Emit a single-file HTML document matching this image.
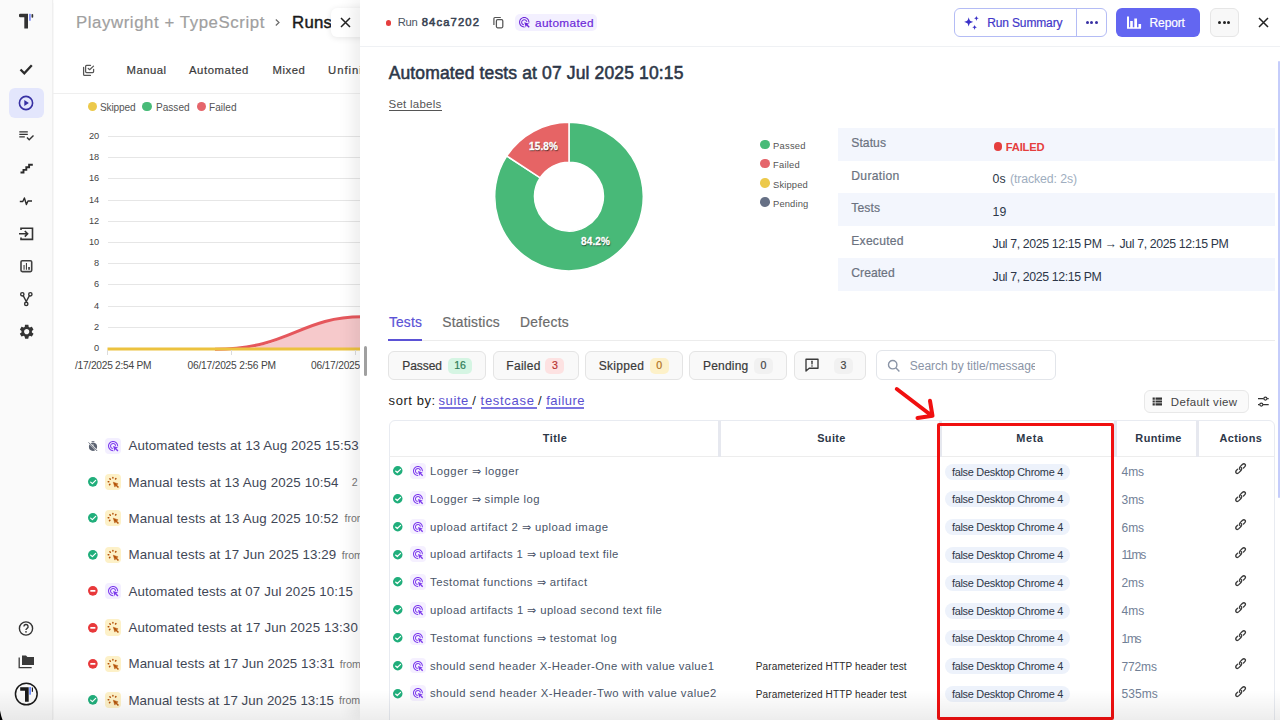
<!DOCTYPE html>
<html><head><meta charset="utf-8">
<style>
*{box-sizing:border-box;margin:0;padding:0}
html,body{width:1280px;height:720px;overflow:hidden;background:#fff;font-family:"Liberation Sans",sans-serif;color:#1f2937}
.t{position:absolute;white-space:nowrap}
svg{overflow:visible}
</style></head><body>

<div style="position:absolute;left:0;top:0;width:53px;height:720px;background:#fafafa;border-right:1px solid #efefef;box-shadow:0.5px 0 1px rgba(0,0,0,0.03)"></div>
<div style="position:absolute;left:8.5px;top:88px;width:35px;height:29.5px;background:#e3e6fc;border-radius:6px"></div>
<svg style="position:absolute;left:0;top:0" width="52" height="40"><path d="M19 15q0-1.2 1.2-1.2H28v14.4q0 .3-.3.3h-3.1q-.3 0-.3-.3V17.3h-4.1q-1.2 0-1.2-1.2z" fill="#333"/><rect x="29" y="13.8" width="1.8" height="7" rx="0.5" fill="#8090f8"/><rect x="31.5" y="14" width="1.7" height="3.8" rx="0.8" fill="#333"/></svg>
<svg style="position:absolute;left:19px;top:63px;" width="14" height="12" viewBox="0 0 14 12"><path d="M1.5 6.5l3.8 3.8L12.8 2.2" stroke="#2b2b2b" stroke-width="2.3" fill="none"/></svg>
<svg style="position:absolute;left:18px;top:95px;" width="16" height="16" viewBox="0 0 16 16"><circle cx="8" cy="8" r="6.6" stroke="#3730a3" stroke-width="1.6" fill="none"/><path d="M6.3 4.9v6.2l4.6-3.1z" fill="#3730a3"/></svg>
<svg style="position:absolute;left:18px;top:130px;" width="17" height="12" viewBox="0 0 17 12"><path d="M1.3 1.8h8.5M1.3 4.3h8.5M1.3 6.9h5.5" stroke="#333" stroke-width="1.3"/><path d="M9 7.5l2.2 2.3 4.3-4.3" stroke="#333" stroke-width="1.4" fill="none"/></svg>
<svg style="position:absolute;left:19px;top:162px;" width="15" height="12" viewBox="0 0 15 12"><path d="M1.5 10.5h3v-2.6h2.8v-2.6h2.8V2.7h3.7" stroke="#2b2b2b" stroke-width="1.9" fill="none"/></svg>
<svg style="position:absolute;left:19px;top:195px;" width="14" height="12" viewBox="0 0 14 12"><path d="M0.8 6.5h3l1.6-3.5 2 6.5 1.6-3.5h4" stroke="#2b2b2b" stroke-width="1.4" fill="none" stroke-linejoin="round"/></svg>
<svg style="position:absolute;left:18px;top:226px;" width="16" height="15" viewBox="0 0 16 15"><path d="M3 4V2.2h11.5v11.2H3v-2" stroke="#333" stroke-width="1.6" fill="none"/><path d="M1 7.8h8.5M6.8 5l2.8 2.8-2.8 2.8" stroke="#333" stroke-width="1.6" fill="none"/></svg>
<svg style="position:absolute;left:0;top:0" width="52" height="720"><rect x="21" y="260.8" width="10.7" height="10.8" rx="1.3" stroke="#404040" stroke-width="1.6" fill="none"/><path d="M23.5 264.9h1.1v4.9h-1.1z M25.9 263h1.1v6.8h-1.1z M28.2 267.1h1.7v2.7h-1.7z" fill="#404040"/></svg>
<svg style="position:absolute;left:0;top:0" width="52" height="720"><g stroke="#333" stroke-width="1.4" fill="none"><circle cx="22.3" cy="294.3" r="1.65"/><circle cx="30.35" cy="294.3" r="1.65"/><circle cx="26.25" cy="303.9" r="1.65"/><path d="M23.2 295.6L26.25 301.5 29.4 295.6"/></g></svg>
<svg style="position:absolute;left:17.55px;top:323.3px;" width="17.4" height="17.4" viewBox="0 0 24 24"><path d="M19.14 12.94c.04-.3.06-.61.06-.94 0-.32-.02-.64-.07-.94l2.03-1.58c.18-.14.23-.41.12-.61l-1.920-3.32c-.12-.22-.37-.29-.59-.22l-2.39.96c-.5-.38-1.03-.7-1.62-.94l-.36-2.54c-.04-.24-.24-.41-.48-.41h-3.84c-.24 0-.43.17-.47.41l-.36 2.54c-.59.24-1.13.57-1.62.94l-2.39-.96c-.22-.08-.47 0-.59.22L2.74 8.87c-.12.21-.08.47.12.61l2.03 1.58c-.05.3-.09.63-.09.94s.02.64.07.94l-2.03 1.58c-.18.14-.23.41-.12.61l1.92 3.32c.12.22.37.29.59.22l2.39-.96c.5.38 1.03.7 1.62.94l.36 2.54c.05.24.24.41.48.41h3.84c.24 0 .44-.17.47-.41l.36-2.54c.59-.24 1.13-.56 1.62-.94l2.39.96c.22.08.47 0 .59-.22l1.92-3.32c.12-.22.07-.47-.12-.61l-2.01-1.58zM12 15.6c-1.98 0-3.6-1.62-3.6-3.6s1.62-3.6 3.6-3.6 3.6 1.62 3.6 3.6-1.62 3.6-3.6 3.6z" fill="#333"/></svg>
<svg style="position:absolute;left:18px;top:620px;" width="16" height="16" viewBox="0 0 16 16"><circle cx="8" cy="8.5" r="6.6" stroke="#333" stroke-width="1.4" fill="none"/><path d="M5.9 6.6a2.1 2.1 0 1 1 3 1.9c-0.7 0.4-0.9 0.8-0.9 1.6" stroke="#333" stroke-width="1.4" fill="none"/><circle cx="8" cy="11.8" r="0.85" fill="#333"/></svg>
<svg style="position:absolute;left:18px;top:654px;" width="17" height="15" viewBox="0 0 17 15"><path d="M4 1.5h4l1.4 1.4h6.6v8.2H4z" fill="#3a3a3a"/><path d="M1.2 3.5v10.2h12.5" stroke="#3a3a3a" stroke-width="1.3" fill="none"/></svg>
<svg style="position:absolute;left:0;top:660px" width="52" height="60"><circle cx="26.3" cy="34" r="10.85" stroke="#1a1a1a" stroke-width="1.5" fill="none"/><path d="M20.2 27.3h8.5v14.4h-3.7V30.8h-4.8z" fill="#1a1a1a"/><rect x="29.2" y="27" width="1.8" height="7.7" fill="#6f8dff"/><rect x="31.8" y="27.5" width="1.2" height="4.3" fill="#1a1a1a"/></svg>
<div class="t" id="t0" style="left:76.00px;top:13.10px;font-size:16.80px;line-height:19px;color:#a0a0a0;-webkit-text-stroke:0.2px #a0a0a0;letter-spacing:0.584px;">Playwright + TypeScript</div>
<svg style="position:absolute;left:274px;top:18px;" width="7" height="9" viewBox="0 0 7 9"><path d="M1.8 1.5l3.2 3-3.2 3" stroke="#6b6b6b" stroke-width="1.2" fill="none"/></svg>
<div class="t" id="t1" style="left:292.10px;top:13.20px;font-size:16.80px;line-height:19px;color:#1a1a1a;-webkit-text-stroke:0.2px #1a1a1a;letter-spacing:0.172px;-webkit-text-stroke:0.45px #1a1a1a;">Runs</div>
<svg style="position:absolute;left:0;top:0" width="360" height="100"><g stroke="#555" stroke-width="1.25" fill="none" stroke-linecap="round" stroke-linejoin="round"><path d="M90.5 65.4H86.6q-1 0-1 1v5.1q0 1 1 1h6q1 0 1-1v-2.2"/><path d="M83.6 67.3v7.1q0 1 1 1h5.8"/><path d="M88.2 68.4l1.4 1.3 3.9-3.6"/></g></svg>
<div class="t" id="t2" style="left:126.50px;top:64.40px;font-size:11.30px;line-height:12px;color:#3a3a3a;-webkit-text-stroke:0.2px #3a3a3a;letter-spacing:0.492px;">Manual</div>
<div class="t" id="t3" style="left:189.00px;top:64.40px;font-size:11.30px;line-height:12px;color:#3a3a3a;-webkit-text-stroke:0.2px #3a3a3a;letter-spacing:0.581px;">Automated</div>
<div class="t" id="t4" style="left:272.50px;top:64.40px;font-size:11.30px;line-height:12px;color:#3a3a3a;-webkit-text-stroke:0.2px #3a3a3a;letter-spacing:0.537px;">Mixed</div>
<div class="t" id="t5" style="left:328.00px;top:64.40px;font-size:11.30px;line-height:12px;color:#3a3a3a;-webkit-text-stroke:0.2px #3a3a3a;letter-spacing:0.989px;">Unfinished</div>
<div style="position:absolute;left:52px;top:92.5px;width:308px;height:1px;background:#efefef"></div>
<div style="position:absolute;left:87.7px;top:101.5px;width:9.6px;height:9.6px;border-radius:50%;background:#ecc94b"></div>
<div class="t" id="t6" style="left:100.00px;top:102.00px;font-size:10.10px;line-height:11px;color:#555;letter-spacing:-0.144px;">Skipped</div>
<div style="position:absolute;left:142.2px;top:101.5px;width:9.6px;height:9.6px;border-radius:50%;background:#48bb78"></div>
<div class="t" id="t7" style="left:156.00px;top:102.00px;font-size:10.10px;line-height:11px;color:#555;letter-spacing:-0.011px;">Passed</div>
<div style="position:absolute;left:196.7px;top:101.5px;width:9.6px;height:9.6px;border-radius:50%;background:#e5656b"></div>
<div class="t" id="t8" style="left:209.00px;top:102.00px;font-size:10.10px;line-height:11px;color:#555;letter-spacing:0.024px;">Failed</div>
<div style="position:absolute;left:107.5px;top:135.9px;width:253px;height:1px;background:#e6e6e6"></div>
<div class="t" id="t9" style="left:99.20px;top:131.00px;font-size:9.20px;line-height:10px;color:#444;transform:translateX(-100%);">20</div>
<div style="position:absolute;left:107.5px;top:157.1px;width:253px;height:1px;background:#e6e6e6"></div>
<div class="t" id="t10" style="left:99.20px;top:152.20px;font-size:9.20px;line-height:10px;color:#444;transform:translateX(-100%);">18</div>
<div style="position:absolute;left:107.5px;top:178.3px;width:253px;height:1px;background:#e6e6e6"></div>
<div class="t" id="t11" style="left:99.20px;top:173.40px;font-size:9.20px;line-height:10px;color:#444;transform:translateX(-100%);">16</div>
<div style="position:absolute;left:107.5px;top:199.5px;width:253px;height:1px;background:#e6e6e6"></div>
<div class="t" id="t12" style="left:99.20px;top:194.60px;font-size:9.20px;line-height:10px;color:#444;transform:translateX(-100%);">14</div>
<div style="position:absolute;left:107.5px;top:220.7px;width:253px;height:1px;background:#e6e6e6"></div>
<div class="t" id="t13" style="left:99.20px;top:215.80px;font-size:9.20px;line-height:10px;color:#444;transform:translateX(-100%);">12</div>
<div style="position:absolute;left:107.5px;top:241.9px;width:253px;height:1px;background:#e6e6e6"></div>
<div class="t" id="t14" style="left:99.20px;top:237.00px;font-size:9.20px;line-height:10px;color:#444;transform:translateX(-100%);">10</div>
<div style="position:absolute;left:107.5px;top:263.1px;width:253px;height:1px;background:#e6e6e6"></div>
<div class="t" id="t15" style="left:99.20px;top:258.20px;font-size:9.20px;line-height:10px;color:#444;transform:translateX(-100%);">8</div>
<div style="position:absolute;left:107.5px;top:284.3px;width:253px;height:1px;background:#e6e6e6"></div>
<div class="t" id="t16" style="left:99.20px;top:279.40px;font-size:9.20px;line-height:10px;color:#444;transform:translateX(-100%);">6</div>
<div style="position:absolute;left:107.5px;top:305.5px;width:253px;height:1px;background:#e6e6e6"></div>
<div class="t" id="t17" style="left:99.20px;top:300.60px;font-size:9.20px;line-height:10px;color:#444;transform:translateX(-100%);">4</div>
<div style="position:absolute;left:107.5px;top:326.7px;width:253px;height:1px;background:#e6e6e6"></div>
<div class="t" id="t18" style="left:99.20px;top:321.80px;font-size:9.20px;line-height:10px;color:#444;transform:translateX(-100%);">2</div>
<div class="t" id="t19" style="left:99.20px;top:343.00px;font-size:9.20px;line-height:10px;color:#444;transform:translateX(-100%);">0</div>
<svg style="position:absolute;left:52px;top:0" width="308" height="400" viewBox="52 0 308 400"><path d="M232 349 C 290 349, 300 316.8, 360 316.8 L360 349 Z" fill="#f6c9cb"/><path d="M215 349.2 C 290 349.2, 300 316.8, 362 316.8" stroke="#e5575c" stroke-width="3" fill="none"/><path d="M107.5 349 H360" stroke="#ecc23f" stroke-width="3"/><path d="M107.5 350 v5 M231.5 350 v5 M355.5 350 v5" stroke="#dcdcdc" stroke-width="1"/></svg>
<div class="t" id="t20" style="left:75.00px;top:360.00px;font-size:10.20px;line-height:11px;color:#444;letter-spacing:-0.263px;">/17/2025 2:54 PM</div>
<div class="t" id="t21" style="left:187.50px;top:360.00px;font-size:10.20px;line-height:11px;color:#444;letter-spacing:-0.192px;">06/17/2025 2:56 PM</div>
<div class="t" id="t22" style="left:311.00px;top:360.00px;font-size:10.20px;line-height:11px;color:#444;letter-spacing:-0.192px;">06/17/2025 2:58 PM</div>
<svg style="position:absolute;left:87px;top:439.6px;" width="12" height="12" viewBox="0 0 12 12"><circle cx="6" cy="6.8" r="4.1" fill="#5b6271"/><rect x="4.6" y="1.2" width="2.8" height="1.1" fill="#5b6271"/><path d="M1.4 2.2l9 9" stroke="#fff" stroke-width="1.7"/><path d="M1.6 2.4l8.6 8.6" stroke="#5b6271" stroke-width="0.9"/><path d="M6 4.2v1.8" stroke="#fff" stroke-width="0.7"/></svg>
<div style="position:absolute;left:105.2px;top:437.5px;width:16.1px;height:16.2px;border-radius:4px;background:#f3efff"></div>
<svg style="position:absolute;left:107.2px;top:439.5px;" width="12.2" height="12.2" viewBox="0 0 24 24"><path d="M11.71 17.99C8.53 17.84 6 15.22 6 12c0-3.31 2.69-6 6-6 3.22 0 5.84 2.53 5.99 5.71l-2.1-.63C15.48 9.31 13.89 8 12 8c-2.21 0-4 1.79-4 4 0 1.89 1.31 3.47 3.08 3.89l.63 2.1zM22 12c0 .3-.01.6-.04.9l-1.97-.59c.01-.1.01-.21.01-.31 0-4.42-3.58-8-8-8s-8 3.58-8 8 3.58 8 8 8c.1 0 .21 0 .31-.01l.59 1.97c-.3.03-.6.04-.9.04-5.52 0-10-4.48-10-10S6.48 2 12 2s10 4.48 10 10zm-3.77 4.26L22 15l-10-3 3 10 1.26-3.77 4.27 4.27 1.98-1.98-4.28-4.26z" fill="#7c3aed"/></svg>
<div class="t" id="t23" style="left:128.50px;top:438.20px;font-size:13.30px;line-height:15px;color:#3f4756;letter-spacing:0.113px;">Automated tests at 13 Aug 2025 15:53</div>
<svg style="position:absolute;left:88.15px;top:477.12px;" width="9.7" height="9.7" viewBox="0 0 10 10"><circle cx="5" cy="5" r="5" fill="#20ae7b"/><path d="M2.75 5.3l1.75 1.55 3.4-3.3" stroke="#fff" stroke-width="1.25" fill="none" stroke-linecap="round" stroke-linejoin="round"/></svg>
<div style="position:absolute;left:105.2px;top:473.87px;width:16.1px;height:16.2px;border-radius:4px;background:#fdf1c8"></div>
<svg style="position:absolute;left:105.2px;top:473.87px;" width="16" height="16" viewBox="0 0 16 16"><g stroke="#b45309" stroke-width="1.5" stroke-linecap="round"><path d="M4.9 4.8l0.4 0.4M7.9 3.4v0.6M10.9 4.6l-0.4 0.4M3.2 7.8h0.6M4.5 10.6l0.4-0.4"/></g><path d="M8.3 8.2L13.1 9.9 11.4 10.7 13.7 13 13 13.7 10.7 11.4 9.9 13.1Z" fill="#b45309" stroke="#b45309" stroke-width="0.5" stroke-linejoin="round"/></svg>
<div class="t" id="t24" style="left:128.50px;top:474.57px;font-size:13.30px;line-height:15px;color:#3f4756;letter-spacing:0.139px;">Manual tests at 13 Aug 2025 10:54</div>
<div class="t" id="t25" style="left:351.80px;top:475.97px;font-size:10.60px;line-height:12px;color:#777;">2</div>
<svg style="position:absolute;left:88.15px;top:513.49px;" width="9.7" height="9.7" viewBox="0 0 10 10"><circle cx="5" cy="5" r="5" fill="#20ae7b"/><path d="M2.75 5.3l1.75 1.55 3.4-3.3" stroke="#fff" stroke-width="1.25" fill="none" stroke-linecap="round" stroke-linejoin="round"/></svg>
<div style="position:absolute;left:105.2px;top:510.24px;width:16.1px;height:16.2px;border-radius:4px;background:#fdf1c8"></div>
<svg style="position:absolute;left:105.2px;top:510.24px;" width="16" height="16" viewBox="0 0 16 16"><g stroke="#b45309" stroke-width="1.5" stroke-linecap="round"><path d="M4.9 4.8l0.4 0.4M7.9 3.4v0.6M10.9 4.6l-0.4 0.4M3.2 7.8h0.6M4.5 10.6l0.4-0.4"/></g><path d="M8.3 8.2L13.1 9.9 11.4 10.7 13.7 13 13 13.7 10.7 11.4 9.9 13.1Z" fill="#b45309" stroke="#b45309" stroke-width="0.5" stroke-linejoin="round"/></svg>
<div class="t" id="t26" style="left:128.50px;top:510.94px;font-size:13.30px;line-height:15px;color:#3f4756;letter-spacing:0.139px;">Manual tests at 13 Aug 2025 10:52</div>
<div class="t" id="t27" style="left:344.50px;top:512.34px;font-size:10.60px;line-height:12px;color:#777;">from</div>
<svg style="position:absolute;left:88.15px;top:549.86px;" width="9.7" height="9.7" viewBox="0 0 10 10"><circle cx="5" cy="5" r="5" fill="#20ae7b"/><path d="M2.75 5.3l1.75 1.55 3.4-3.3" stroke="#fff" stroke-width="1.25" fill="none" stroke-linecap="round" stroke-linejoin="round"/></svg>
<div style="position:absolute;left:105.2px;top:546.61px;width:16.1px;height:16.2px;border-radius:4px;background:#fdf1c8"></div>
<svg style="position:absolute;left:105.2px;top:546.61px;" width="16" height="16" viewBox="0 0 16 16"><g stroke="#b45309" stroke-width="1.5" stroke-linecap="round"><path d="M4.9 4.8l0.4 0.4M7.9 3.4v0.6M10.9 4.6l-0.4 0.4M3.2 7.8h0.6M4.5 10.6l0.4-0.4"/></g><path d="M8.3 8.2L13.1 9.9 11.4 10.7 13.7 13 13 13.7 10.7 11.4 9.9 13.1Z" fill="#b45309" stroke="#b45309" stroke-width="0.5" stroke-linejoin="round"/></svg>
<div class="t" id="t28" style="left:128.50px;top:547.31px;font-size:13.30px;line-height:15px;color:#3f4756;letter-spacing:0.115px;">Manual tests at 17 Jun 2025 13:29</div>
<div class="t" id="t29" style="left:341.70px;top:548.71px;font-size:10.60px;line-height:12px;color:#777;">from</div>
<svg style="position:absolute;left:88.15px;top:586.23px;" width="9.7" height="9.7" viewBox="0 0 10 10"><circle cx="5" cy="5" r="5" fill="#e8383a"/><rect x="2.4" y="4.1" width="5.2" height="1.8" fill="#fff"/></svg>
<div style="position:absolute;left:105.2px;top:582.98px;width:16.1px;height:16.2px;border-radius:4px;background:#f3efff"></div>
<svg style="position:absolute;left:107.2px;top:584.98px;" width="12.2" height="12.2" viewBox="0 0 24 24"><path d="M11.71 17.99C8.53 17.84 6 15.22 6 12c0-3.31 2.69-6 6-6 3.22 0 5.84 2.53 5.99 5.71l-2.1-.63C15.48 9.31 13.89 8 12 8c-2.21 0-4 1.79-4 4 0 1.89 1.31 3.47 3.08 3.89l.63 2.1zM22 12c0 .3-.01.6-.04.9l-1.97-.59c.01-.1.01-.21.01-.31 0-4.42-3.58-8-8-8s-8 3.58-8 8 3.58 8 8 8c.1 0 .21 0 .31-.01l.59 1.97c-.3.03-.6.04-.9.04-5.52 0-10-4.48-10-10S6.48 2 12 2s10 4.48 10 10zm-3.77 4.26L22 15l-10-3 3 10 1.26-3.77 4.27 4.27 1.98-1.98-4.28-4.26z" fill="#7c3aed"/></svg>
<div class="t" id="t30" style="left:128.50px;top:583.68px;font-size:13.30px;line-height:15px;color:#3f4756;letter-spacing:0.120px;">Automated tests at 07 Jul 2025 10:15</div>
<svg style="position:absolute;left:88.15px;top:622.6px;" width="9.7" height="9.7" viewBox="0 0 10 10"><circle cx="5" cy="5" r="5" fill="#e8383a"/><rect x="2.4" y="4.1" width="5.2" height="1.8" fill="#fff"/></svg>
<div style="position:absolute;left:105.2px;top:619.35px;width:16.1px;height:16.2px;border-radius:4px;background:#fdf1c8"></div>
<svg style="position:absolute;left:105.2px;top:619.35px;" width="16" height="16" viewBox="0 0 16 16"><g stroke="#b45309" stroke-width="1.5" stroke-linecap="round"><path d="M4.9 4.8l0.4 0.4M7.9 3.4v0.6M10.9 4.6l-0.4 0.4M3.2 7.8h0.6M4.5 10.6l0.4-0.4"/></g><path d="M8.3 8.2L13.1 9.9 11.4 10.7 13.7 13 13 13.7 10.7 11.4 9.9 13.1Z" fill="#b45309" stroke="#b45309" stroke-width="0.5" stroke-linejoin="round"/></svg>
<div class="t" id="t31" style="left:128.50px;top:620.05px;font-size:13.30px;line-height:15px;color:#3f4756;letter-spacing:0.130px;">Automated tests at 17 Jun 2025 13:30</div>
<svg style="position:absolute;left:88.15px;top:658.97px;" width="9.7" height="9.7" viewBox="0 0 10 10"><circle cx="5" cy="5" r="5" fill="#e8383a"/><rect x="2.4" y="4.1" width="5.2" height="1.8" fill="#fff"/></svg>
<div style="position:absolute;left:105.2px;top:655.72px;width:16.1px;height:16.2px;border-radius:4px;background:#fdf1c8"></div>
<svg style="position:absolute;left:105.2px;top:655.72px;" width="16" height="16" viewBox="0 0 16 16"><g stroke="#b45309" stroke-width="1.5" stroke-linecap="round"><path d="M4.9 4.8l0.4 0.4M7.9 3.4v0.6M10.9 4.6l-0.4 0.4M3.2 7.8h0.6M4.5 10.6l0.4-0.4"/></g><path d="M8.3 8.2L13.1 9.9 11.4 10.7 13.7 13 13 13.7 10.7 11.4 9.9 13.1Z" fill="#b45309" stroke="#b45309" stroke-width="0.5" stroke-linejoin="round"/></svg>
<div class="t" id="t32" style="left:128.50px;top:656.42px;font-size:13.30px;line-height:15px;color:#3f4756;letter-spacing:0.065px;">Manual tests at 17 Jun 2025 13:31</div>
<div class="t" id="t33" style="left:339.70px;top:657.82px;font-size:10.60px;line-height:12px;color:#777;">from</div>
<svg style="position:absolute;left:88.15px;top:695.34px;" width="9.7" height="9.7" viewBox="0 0 10 10"><circle cx="5" cy="5" r="5" fill="#20ae7b"/><path d="M2.75 5.3l1.75 1.55 3.4-3.3" stroke="#fff" stroke-width="1.25" fill="none" stroke-linecap="round" stroke-linejoin="round"/></svg>
<div style="position:absolute;left:105.2px;top:692.09px;width:16.1px;height:16.2px;border-radius:4px;background:#fdf1c8"></div>
<svg style="position:absolute;left:105.2px;top:692.09px;" width="16" height="16" viewBox="0 0 16 16"><g stroke="#b45309" stroke-width="1.5" stroke-linecap="round"><path d="M4.9 4.8l0.4 0.4M7.9 3.4v0.6M10.9 4.6l-0.4 0.4M3.2 7.8h0.6M4.5 10.6l0.4-0.4"/></g><path d="M8.3 8.2L13.1 9.9 11.4 10.7 13.7 13 13 13.7 10.7 11.4 9.9 13.1Z" fill="#b45309" stroke="#b45309" stroke-width="0.5" stroke-linejoin="round"/></svg>
<div class="t" id="t34" style="left:128.50px;top:692.79px;font-size:13.30px;line-height:15px;color:#3f4756;letter-spacing:0.040px;">Manual tests at 17 Jun 2025 13:15</div>
<div class="t" id="t35" style="left:339.00px;top:694.19px;font-size:10.60px;line-height:12px;color:#777;">from</div>
<div style="position:absolute;left:363.5px;top:346px;width:3.2px;height:29.5px;border-radius:2px;background:#a0a0a0;z-index:5"></div>
<div style="position:absolute;left:331px;top:8px;width:40px;height:29px;border-radius:6px;background:#fff;box-shadow:0 1px 6px rgba(0,0,0,0.10)"></div>
<svg style="position:absolute;left:340px;top:17px;" width="11" height="11" viewBox="0 0 11 11"><path d="M1 1l9 9M10 1l-9 9" stroke="#222" stroke-width="1.5"/></svg>
<div style="position:absolute;left:360px;top:0;width:920px;height:720px;background:#fff;box-shadow:-8px 0 14px rgba(0,0,0,0.07)"></div>
<div style="position:absolute;left:360px;top:46.3px;width:920px;height:1.2px;background:#eff1f4"></div>
<div style="position:absolute;left:385.5px;top:20.3px;width:5.6px;height:5.6px;border-radius:50%;background:#e53e3e"></div>
<div class="t" id="t36" style="left:397.80px;top:16.10px;font-size:11.25px;line-height:12px;color:#4b5563;letter-spacing:-0.391px;">Run</div>
<div class="t" id="t37" style="left:421.70px;top:16.10px;font-size:11.25px;line-height:12px;color:#374151;-webkit-text-stroke:0.55px #374151;letter-spacing:1.119px;">84ca7202</div>
<svg style="position:absolute;left:490px;top:14px;" width="16" height="16" viewBox="0 0 16 16"><path d="M3.9 11V4.5q0-1 1-1H10.8" stroke="#555" stroke-width="1.2" fill="none"/><rect x="6.4" y="5.7" width="6.4" height="8.1" rx="1.2" stroke="#555" stroke-width="1.25" fill="none"/></svg>
<div style="position:absolute;left:515px;top:14.4px;width:82px;height:16.4px;border-radius:5px;background:#f3f0ff"></div>
<svg style="position:absolute;left:518.25px;top:16.15px;" width="12.5" height="12.5" viewBox="0 0 24 24"><path d="M11.71 17.99C8.53 17.84 6 15.22 6 12c0-3.31 2.69-6 6-6 3.22 0 5.84 2.53 5.99 5.71l-2.1-.63C15.48 9.31 13.89 8 12 8c-2.21 0-4 1.79-4 4 0 1.89 1.31 3.47 3.08 3.89l.63 2.1zM22 12c0 .3-.01.6-.04.9l-1.97-.59c.01-.1.01-.21.01-.31 0-4.42-3.58-8-8-8s-8 3.58-8 8 3.58 8 8 8c.1 0 .21 0 .31-.01l.59 1.97c-.3.03-.6.04-.9.04-5.52 0-10-4.48-10-10S6.48 2 12 2s10 4.48 10 10zm-3.77 4.26L22 15l-10-3 3 10 1.26-3.77 4.27 4.27 1.98-1.98-4.28-4.26z" fill="#6d28d9"/></svg>
<div class="t" id="t38" style="left:535.00px;top:15.70px;font-size:11.80px;line-height:14px;color:#6d28d9;-webkit-text-stroke:0.2px #6d28d9;letter-spacing:0.352px;">automated</div>
<div style="position:absolute;left:953.5px;top:8px;width:153px;height:28.5px;border-radius:6px;border:1px solid #b4bcf5;background:#fff"></div>
<div style="position:absolute;left:1076px;top:8px;width:1px;height:28.5px;background:#b4bcf5"></div>
<svg style="position:absolute;left:0;top:0" width="1280" height="40"><path d="M968.70 17.30 C969.71 20.89 969.71 20.89 973.30 21.90 C969.71 22.91 969.71 22.91 968.70 26.50 C967.69 22.91 967.69 22.91 964.10 21.90 C967.69 20.89 967.69 20.89 968.70 17.30 Z M976.40 15.70 C976.97 17.73 976.97 17.73 979.00 18.30 C976.97 18.87 976.97 18.87 976.40 20.90 C975.83 18.87 975.83 18.87 973.80 18.30 C975.83 17.73 975.83 17.73 976.40 15.70 Z M974.60 24.70 C975.17 26.73 975.17 26.73 977.20 27.30 C975.17 27.87 975.17 27.87 974.60 29.90 C974.03 27.87 974.03 27.87 972.00 27.30 C974.03 26.73 974.03 26.73 974.60 24.70 Z" fill="#3b32c8"/></svg>
<div class="t" id="t39" style="left:987.20px;top:16.20px;font-size:12.00px;line-height:14px;color:#4338ca;-webkit-text-stroke:0.2px #4338ca;letter-spacing:-0.139px;">Run Summary</div>
<div style="position:absolute;left:1085.5px;top:21.3px;width:3px;height:3px;border-radius:50%;background:#3730a3"></div>
<div style="position:absolute;left:1090px;top:21.3px;width:3px;height:3px;border-radius:50%;background:#3730a3"></div>
<div style="position:absolute;left:1094.5px;top:21.3px;width:3px;height:3px;border-radius:50%;background:#3730a3"></div>
<div style="position:absolute;left:1116px;top:8px;width:84px;height:29px;border-radius:6px;background:#6366f1"></div>
<svg style="position:absolute;left:0;top:0" width="1280" height="40"><path d="M1127 16.6h2v10.6h12v1.6h-14z M1130.2 21h2.6v7h-2.6z M1134.3 18.5h2.7v9.5h-2.7z M1138.5 24h2.6v4h-2.6z" fill="#fff"/></svg>
<div class="t" id="t40" style="left:1149.60px;top:16.20px;font-size:12.00px;line-height:14px;color:#ffffff;-webkit-text-stroke:0.2px #ffffff;letter-spacing:-0.137px;">Report</div>
<div style="position:absolute;left:1209.6px;top:8px;width:29px;height:29px;border-radius:6px;background:#f8f8f8;border:1px solid #e6e6e6"></div>
<div style="position:absolute;left:1218px;top:21.3px;width:3px;height:3px;border-radius:50%;background:#222"></div>
<div style="position:absolute;left:1222.5px;top:21.3px;width:3px;height:3px;border-radius:50%;background:#222"></div>
<div style="position:absolute;left:1227px;top:21.3px;width:3px;height:3px;border-radius:50%;background:#222"></div>
<svg style="position:absolute;left:1258px;top:17px;" width="11" height="11" viewBox="0 0 11 11"><path d="M1 1l9 9M10 1l-9 9" stroke="#222" stroke-width="1.5"/></svg>
<div class="t" id="t41" style="left:388.70px;top:62.80px;font-size:17.50px;line-height:20px;color:#2d3748;-webkit-text-stroke:0.55px #2d3748;letter-spacing:0.137px;">Automated tests at 07 Jul 2025 10:15</div>
<div class="t" id="t42" style="left:388.50px;top:97.50px;font-size:11.50px;line-height:12px;color:#555;letter-spacing:0.250px;">Set labels</div>
<div style="position:absolute;left:388.5px;top:110px;width:53px;height:1.2px;background:#555"></div>
<svg style="position:absolute;left:0;top:0" width="1280" height="300"><path d="M569.00 122.30 A74.30 74.30 0 1 1 506.80 155.96 L540.20 177.78 A34.40 34.40 0 1 0 569.00 162.20 Z" fill="#48b978" stroke="#fff" stroke-width="1.5"/><path d="M506.80 155.96 A74.30 74.30 0 0 1 569.00 122.30 L569.00 162.20 A34.40 34.40 0 0 0 540.20 177.78 Z" fill="#e66465" stroke="#fff" stroke-width="1.5"/></svg>
<div class="t" id="t43" style="left:529.00px;top:141.00px;font-size:10.00px;line-height:11px;color:#fff;font-weight:700;letter-spacing:0.134px;text-shadow:0.6px 0.8px 1.2px rgba(0,0,0,0.7);-webkit-text-stroke:0.3px #fff;">15.8%</div>
<div class="t" id="t44" style="left:581.00px;top:236.00px;font-size:10.00px;line-height:11px;color:#fff;font-weight:700;letter-spacing:0.134px;text-shadow:0.6px 0.8px 1.2px rgba(0,0,0,0.7);-webkit-text-stroke:0.3px #fff;">84.2%</div>
<div style="position:absolute;left:760.4px;top:139.6px;width:9.6px;height:9.6px;border-radius:50%;background:#48bb78"></div>
<div class="t" id="t45" style="left:773.00px;top:140.10px;font-size:9.40px;line-height:11px;color:#555;letter-spacing:0.249px;">Passed</div>
<div style="position:absolute;left:760.4px;top:158.8px;width:9.6px;height:9.6px;border-radius:50%;background:#e5656b"></div>
<div class="t" id="t46" style="left:773.00px;top:159.30px;font-size:9.40px;line-height:11px;color:#555;letter-spacing:0.236px;">Failed</div>
<div style="position:absolute;left:760.4px;top:178px;width:9.6px;height:9.6px;border-radius:50%;background:#ecc94b"></div>
<div class="t" id="t47" style="left:773.00px;top:178.50px;font-size:9.40px;line-height:11px;color:#555;letter-spacing:0.139px;">Skipped</div>
<div style="position:absolute;left:760.4px;top:197.2px;width:9.6px;height:9.6px;border-radius:50%;background:#667085"></div>
<div class="t" id="t48" style="left:773.00px;top:197.70px;font-size:9.40px;line-height:11px;color:#555;letter-spacing:0.135px;">Pending</div>
<div style="position:absolute;left:838px;top:128.2px;width:437px;height:32.5px;background:#f3f6fd"></div>
<div class="t" id="t49" style="left:851.30px;top:136.20px;font-size:12.15px;line-height:14px;color:#6b7280;-webkit-text-stroke:0.2px #6b7280;letter-spacing:0.050px;">Status</div>
<div class="t" id="t50" style="left:851.30px;top:168.70px;font-size:12.15px;line-height:14px;color:#6b7280;-webkit-text-stroke:0.2px #6b7280;letter-spacing:0.295px;">Duration</div>
<div style="position:absolute;left:838px;top:193.2px;width:437px;height:32.5px;background:#f3f6fd"></div>
<div class="t" id="t51" style="left:851.30px;top:201.20px;font-size:12.15px;line-height:14px;color:#6b7280;-webkit-text-stroke:0.2px #6b7280;letter-spacing:0.084px;">Tests</div>
<div class="t" id="t52" style="left:851.30px;top:233.70px;font-size:12.15px;line-height:14px;color:#6b7280;-webkit-text-stroke:0.2px #6b7280;letter-spacing:0.219px;">Executed</div>
<div style="position:absolute;left:838px;top:258.2px;width:437px;height:32.5px;background:#f3f6fd"></div>
<div class="t" id="t53" style="left:851.30px;top:266.20px;font-size:12.15px;line-height:14px;color:#6b7280;-webkit-text-stroke:0.2px #6b7280;letter-spacing:0.027px;">Created</div>
<div style="position:absolute;left:993.5px;top:141.8px;width:8.8px;height:8.8px;border-radius:50%;background:#e53e3e"></div>
<div class="t" id="t54" style="left:1005.80px;top:141.00px;font-size:11.20px;line-height:12px;color:#e53e3e;font-weight:700;letter-spacing:-0.220px;">FAILED</div>
<div class="t" id="t55" style="left:992.60px;top:172.00px;font-size:12.30px;line-height:14px;color:#2d3748;letter-spacing:0.161px;">0s</div>
<div class="t" id="t56" style="left:1010.00px;top:172.00px;font-size:12.30px;line-height:14px;color:#a0aec0;letter-spacing:-0.103px;">(tracked: 2s)</div>
<div class="t" id="t57" style="left:992.60px;top:204.50px;font-size:12.30px;line-height:14px;color:#2d3748;">19</div>
<div class="t" id="t58" style="left:992.60px;top:237.00px;font-size:12.30px;line-height:14px;color:#2d3748;letter-spacing:-0.365px;">Jul 7, 2025 12:15 PM → Jul 7, 2025 12:15 PM</div>
<div class="t" id="t59" style="left:992.60px;top:269.50px;font-size:12.30px;line-height:14px;color:#2d3748;letter-spacing:-0.367px;">Jul 7, 2025 12:15 PM</div>
<div style="position:absolute;left:1277.6px;top:60.5px;width:2.6px;height:437.5px;border-radius:1.5px;background:#c5cdfb"></div>
<div class="t" id="t60" style="left:388.90px;top:314.60px;font-size:13.80px;line-height:15px;color:#5b52d6;-webkit-text-stroke:0.2px #5b52d6;letter-spacing:0.174px;">Tests</div>
<div class="t" id="t61" style="left:442.20px;top:314.60px;font-size:13.80px;line-height:15px;color:#6b6b6b;-webkit-text-stroke:0.2px #6b6b6b;letter-spacing:0.255px;">Statistics</div>
<div class="t" id="t62" style="left:520.00px;top:314.60px;font-size:13.80px;line-height:15px;color:#6b6b6b;-webkit-text-stroke:0.2px #6b6b6b;letter-spacing:0.321px;">Defects</div>
<div style="position:absolute;left:388px;top:340px;width:887px;height:1px;background:#ececec"></div>
<div style="position:absolute;left:388px;top:338.8px;width:34px;height:2.2px;background:#5b52d6"></div>
<div style="position:absolute;left:388.2px;top:350.7px;width:97.5px;height:29.2px;border-radius:6px;background:#f9f9f9;border:1px solid #e4e4e4"></div>
<div class="t" id="t63" style="left:402.30px;top:358.60px;font-size:12.00px;line-height:14px;color:#3a3a3a;-webkit-text-stroke:0.2px #3a3a3a;letter-spacing:-0.070px;">Passed</div>
<div style="position:absolute;left:448.2px;top:357.6px;width:23.7px;height:16px;border-radius:5px;background:#d5f5e3"></div>
<div class="t" id="t64" style="left:460.05px;top:359.00px;font-size:10.60px;line-height:12px;color:#2f7d57;-webkit-text-stroke:0.2px #2f7d57;transform:translateX(-50%);">16</div>
<div style="position:absolute;left:492.5px;top:350.7px;width:86px;height:29.2px;border-radius:6px;background:#f9f9f9;border:1px solid #e4e4e4"></div>
<div class="t" id="t65" style="left:506.30px;top:358.60px;font-size:12.00px;line-height:14px;color:#3a3a3a;-webkit-text-stroke:0.2px #3a3a3a;letter-spacing:0.298px;">Failed</div>
<div style="position:absolute;left:545.3px;top:357.6px;width:19.1px;height:16px;border-radius:5px;background:#fde2e2"></div>
<div class="t" id="t66" style="left:554.85px;top:359.00px;font-size:10.60px;line-height:12px;color:#b83232;-webkit-text-stroke:0.2px #b83232;transform:translateX(-50%);">3</div>
<div style="position:absolute;left:584.7px;top:350.7px;width:97.9px;height:29.2px;border-radius:6px;background:#f9f9f9;border:1px solid #e4e4e4"></div>
<div class="t" id="t67" style="left:598.70px;top:358.60px;font-size:12.00px;line-height:14px;color:#3a3a3a;-webkit-text-stroke:0.2px #3a3a3a;letter-spacing:0.301px;">Skipped</div>
<div style="position:absolute;left:649.8px;top:357.6px;width:18.8px;height:16px;border-radius:5px;background:#fdf1c9"></div>
<div class="t" id="t68" style="left:659.20px;top:359.00px;font-size:10.60px;line-height:12px;color:#b0721f;-webkit-text-stroke:0.2px #b0721f;transform:translateX(-50%);">0</div>
<div style="position:absolute;left:689.4px;top:350.7px;width:97.3px;height:29.2px;border-radius:6px;background:#f9f9f9;border:1px solid #e4e4e4"></div>
<div class="t" id="t69" style="left:703.00px;top:358.60px;font-size:12.00px;line-height:14px;color:#3a3a3a;-webkit-text-stroke:0.2px #3a3a3a;letter-spacing:0.189px;">Pending</div>
<div style="position:absolute;left:753.9px;top:357.6px;width:19px;height:16px;border-radius:5px;background:#f1f1f1"></div>
<div class="t" id="t70" style="left:763.40px;top:359.00px;font-size:10.60px;line-height:12px;color:#444;-webkit-text-stroke:0.2px #444;transform:translateX(-50%);">0</div>
<div style="position:absolute;left:793.7px;top:350.7px;width:72.7px;height:29.2px;border-radius:6px;background:#f9f9f9;border:1px solid #e4e4e4"></div>
<div style="position:absolute;left:834.3px;top:357.6px;width:18.3px;height:16px;border-radius:5px;background:#f1f1f1"></div>
<div class="t" id="t71" style="left:843.45px;top:359.00px;font-size:10.60px;line-height:12px;color:#444;-webkit-text-stroke:0.2px #444;transform:translateX(-50%);">3</div>
<svg style="position:absolute;left:804px;top:357.3px;" width="16" height="16" viewBox="0 0 16 16"><path d="M2 2.2h12v9H5.2L2 14z" stroke="#3a3a3a" stroke-width="1.35" fill="none" stroke-linejoin="round"/><path d="M8 4.3v2.6" stroke="#3a3a3a" stroke-width="1.4" stroke-linecap="round"/><circle cx="8" cy="9" r="0.8" fill="#3a3a3a"/></svg>
<div style="position:absolute;left:876.3px;top:350.2px;width:179.3px;height:30.1px;border-radius:6px;background:#fff;border:1px solid #e2e5ea"></div>
<svg style="position:absolute;left:887px;top:359px;" width="14" height="14" viewBox="0 0 14 14"><circle cx="5.7" cy="5.7" r="4.2" stroke="#8a94a6" stroke-width="1.4" fill="none"/><path d="M8.8 8.8l3.6 3.6" stroke="#8a94a6" stroke-width="1.4"/></svg>
<div class="t" id="t72" style="left:909.80px;top:358.80px;font-size:12.00px;line-height:14px;color:#8a94a6;letter-spacing:-0.018px;width:125px;overflow:hidden;">Search by title/message</div>
<div class="t" id="t73" style="left:388.60px;top:392.80px;font-size:13.00px;line-height:15px;color:#222;letter-spacing:0.570px;">sort by:</div>
<div class="t" id="t74" style="left:438.50px;top:392.80px;font-size:13.00px;line-height:15px;color:#5a4fcf;letter-spacing:0.593px;">suite</div>
<div class="t" id="t75" style="left:472.30px;top:392.80px;font-size:13.00px;line-height:15px;color:#222;">/</div>
<div class="t" id="t76" style="left:480.60px;top:392.80px;font-size:13.00px;line-height:15px;color:#5a4fcf;letter-spacing:0.702px;">testcase</div>
<div class="t" id="t77" style="left:537.90px;top:392.80px;font-size:13.00px;line-height:15px;color:#222;">/</div>
<div class="t" id="t78" style="left:546.25px;top:392.80px;font-size:13.00px;line-height:15px;color:#5a4fcf;letter-spacing:0.487px;">failure</div>
<div style="position:absolute;left:438.5px;top:407.3px;width:33.1px;height:1.3px;background:#7b74e0"></div>
<div style="position:absolute;left:480.6px;top:407.3px;width:56.9px;height:1.3px;background:#7b74e0"></div>
<div style="position:absolute;left:546.25px;top:407.3px;width:38.15px;height:1.3px;background:#7b74e0"></div>
<div style="position:absolute;left:1144px;top:390.3px;width:104.8px;height:22.5px;border-radius:6px;background:#fafafa;border:1px solid #e8e8e8"></div>
<svg style="position:absolute;left:0;top:0" width="1280" height="720"><path d="M1152.6 397.6h2.2v2.1h-2.2z M1155.5 397.6h6.5v2.1h-6.5z M1152.6 400.5h2.2v2.1h-2.2z M1155.5 400.5h6.5v2.1h-6.5z M1152.6 403.3h2.2v2.1h-2.2z M1155.5 403.3h6.5v2.1h-6.5z" fill="#333"/></svg>
<div class="t" id="t79" style="left:1170.80px;top:395.80px;font-size:11.45px;line-height:12px;color:#444;letter-spacing:0.360px;">Default view</div>
<svg style="position:absolute;left:0;top:0" width="1280" height="720"><path d="M1258 398.6h5.7M1267.1 398.6h1.6M1258 404.6h1.6M1263 404.6h5.7" stroke="#333" stroke-width="1.15"/><circle cx="1265.4" cy="398.6" r="1.55" fill="none" stroke="#333" stroke-width="1.15"/><circle cx="1261.3" cy="404.6" r="1.55" fill="none" stroke="#333" stroke-width="1.15"/></svg>
<div style="position:absolute;left:388.5px;top:420.2px;width:886.5px;height:330px;border-radius:6px;border:1px solid #e8ebf1;background:#fff"></div>
<div style="position:absolute;left:389px;top:456.2px;width:885px;height:1px;background:#ededed"></div>
<div style="position:absolute;left:718px;top:421px;width:3px;height:35.5px;background:#e6e8ef"></div>
<div style="position:absolute;left:938.5px;top:421px;width:3px;height:35.5px;background:#e6e8ef"></div>
<div style="position:absolute;left:1114.3px;top:421px;width:3px;height:35.5px;background:#e6e8ef"></div>
<div style="position:absolute;left:1196.2px;top:421px;width:3px;height:35.5px;background:#e6e8ef"></div>
<div class="t" id="t80" style="left:555.00px;top:432.10px;font-size:10.90px;line-height:12px;color:#2d3748;font-weight:700;letter-spacing:0.467px;transform:translateX(-50%);">Title</div>
<div class="t" id="t81" style="left:831.50px;top:432.10px;font-size:10.90px;line-height:12px;color:#2d3748;font-weight:700;letter-spacing:0.408px;transform:translateX(-50%);">Suite</div>
<div class="t" id="t82" style="left:1030.00px;top:432.10px;font-size:10.90px;line-height:12px;color:#2d3748;font-weight:700;letter-spacing:0.648px;transform:translateX(-50%);">Meta</div>
<div class="t" id="t83" style="left:1158.60px;top:432.10px;font-size:10.90px;line-height:12px;color:#2d3748;font-weight:700;letter-spacing:0.416px;transform:translateX(-50%);">Runtime</div>
<div class="t" id="t84" style="left:1240.80px;top:432.10px;font-size:10.90px;line-height:12px;color:#2d3748;font-weight:700;letter-spacing:0.387px;transform:translateX(-50%);">Actions</div>
<svg style="position:absolute;left:392.85px;top:466.15px;" width="9.5" height="9.5" viewBox="0 0 10 10"><circle cx="5" cy="5" r="5" fill="#20ae7b"/><path d="M2.75 5.3l1.75 1.55 3.4-3.3" stroke="#fff" stroke-width="1.25" fill="none" stroke-linecap="round" stroke-linejoin="round"/></svg>
<div style="position:absolute;left:410px;top:463px;width:15.7px;height:15.7px;border-radius:4px;background:#f5f0ff"></div>
<svg style="position:absolute;left:411.75px;top:464.95px;" width="11.9" height="11.9" viewBox="0 0 24 24"><path d="M11.71 17.99C8.53 17.84 6 15.22 6 12c0-3.31 2.69-6 6-6 3.22 0 5.84 2.53 5.99 5.71l-2.1-.63C15.48 9.31 13.89 8 12 8c-2.21 0-4 1.79-4 4 0 1.89 1.31 3.47 3.08 3.89l.63 2.1zM22 12c0 .3-.01.6-.04.9l-1.97-.59c.01-.1.01-.21.01-.31 0-4.42-3.58-8-8-8s-8 3.58-8 8 3.58 8 8 8c.1 0 .21 0 .31-.01l.59 1.97c-.3.03-.6.04-.9.04-5.52 0-10-4.48-10-10S6.48 2 12 2s10 4.48 10 10zm-3.77 4.26L22 15l-10-3 3 10 1.26-3.77 4.27 4.27 1.98-1.98-4.28-4.26z" fill="#7c3aed"/></svg>
<div class="t" id="t85" style="left:430.00px;top:465.00px;font-size:11.30px;line-height:12px;color:#4a5568;letter-spacing:0.500px;">Logger ⇒ logger</div>
<div style="position:absolute;left:945.4px;top:463.5px;width:124.4px;height:16px;border-radius:8px;background:#edf2fb"></div>
<div class="t" id="t86" style="left:951.90px;top:465.60px;font-size:10.90px;line-height:12px;color:#2d3748;letter-spacing:-0.260px;">false Desktop Chrome 4</div>
<div class="t" id="t87" style="left:1121.60px;top:464.90px;font-size:12.00px;line-height:14px;color:#718096;letter-spacing:-0.085px;">4ms</div>
<svg style="position:absolute;left:1235px;top:463.4px;" width="11.2" height="11.2" viewBox="0 0 24 24"><path d="M10 13a5 5 0 0 0 7.54.54l3-3a5 5 0 0 0-7.07-7.07l-1.72 1.71M14 11a5 5 0 0 0-7.54-.54l-3 3a5 5 0 0 0 7.07 7.07l1.71-1.71" stroke="#3a3a3a" stroke-width="1.3" vector-effect="non-scaling-stroke" transform="matrix(0.2 -0.92 -0.92 0.2 20.64 20.64)" fill="none" stroke-linecap="round" stroke-linejoin="round"/></svg>
<svg style="position:absolute;left:392.85px;top:493.95px;" width="9.5" height="9.5" viewBox="0 0 10 10"><circle cx="5" cy="5" r="5" fill="#20ae7b"/><path d="M2.75 5.3l1.75 1.55 3.4-3.3" stroke="#fff" stroke-width="1.25" fill="none" stroke-linecap="round" stroke-linejoin="round"/></svg>
<div style="position:absolute;left:410px;top:490.8px;width:15.7px;height:15.7px;border-radius:4px;background:#f5f0ff"></div>
<svg style="position:absolute;left:411.75px;top:492.75px;" width="11.9" height="11.9" viewBox="0 0 24 24"><path d="M11.71 17.99C8.53 17.84 6 15.22 6 12c0-3.31 2.69-6 6-6 3.22 0 5.84 2.53 5.99 5.71l-2.1-.63C15.48 9.31 13.89 8 12 8c-2.21 0-4 1.79-4 4 0 1.89 1.31 3.47 3.08 3.89l.63 2.1zM22 12c0 .3-.01.6-.04.9l-1.97-.59c.01-.1.01-.21.01-.31 0-4.42-3.58-8-8-8s-8 3.58-8 8 3.58 8 8 8c.1 0 .21 0 .31-.01l.59 1.97c-.3.03-.6.04-.9.04-5.52 0-10-4.48-10-10S6.48 2 12 2s10 4.48 10 10zm-3.77 4.26L22 15l-10-3 3 10 1.26-3.77 4.27 4.27 1.98-1.98-4.28-4.26z" fill="#7c3aed"/></svg>
<div class="t" id="t88" style="left:430.00px;top:492.80px;font-size:11.30px;line-height:12px;color:#4a5568;letter-spacing:0.460px;">Logger ⇒ simple log</div>
<div style="position:absolute;left:945.4px;top:491.3px;width:124.4px;height:16px;border-radius:8px;background:#edf2fb"></div>
<div class="t" id="t89" style="left:951.90px;top:493.40px;font-size:10.90px;line-height:12px;color:#2d3748;letter-spacing:-0.260px;">false Desktop Chrome 4</div>
<div class="t" id="t90" style="left:1121.60px;top:492.70px;font-size:12.00px;line-height:14px;color:#718096;letter-spacing:-0.085px;">3ms</div>
<svg style="position:absolute;left:1235px;top:491.2px;" width="11.2" height="11.2" viewBox="0 0 24 24"><path d="M10 13a5 5 0 0 0 7.54.54l3-3a5 5 0 0 0-7.07-7.07l-1.72 1.71M14 11a5 5 0 0 0-7.54-.54l-3 3a5 5 0 0 0 7.07 7.07l1.71-1.71" stroke="#3a3a3a" stroke-width="1.3" vector-effect="non-scaling-stroke" transform="matrix(0.2 -0.92 -0.92 0.2 20.64 20.64)" fill="none" stroke-linecap="round" stroke-linejoin="round"/></svg>
<svg style="position:absolute;left:392.85px;top:521.75px;" width="9.5" height="9.5" viewBox="0 0 10 10"><circle cx="5" cy="5" r="5" fill="#20ae7b"/><path d="M2.75 5.3l1.75 1.55 3.4-3.3" stroke="#fff" stroke-width="1.25" fill="none" stroke-linecap="round" stroke-linejoin="round"/></svg>
<div style="position:absolute;left:410px;top:518.6px;width:15.7px;height:15.7px;border-radius:4px;background:#f5f0ff"></div>
<svg style="position:absolute;left:411.75px;top:520.55px;" width="11.9" height="11.9" viewBox="0 0 24 24"><path d="M11.71 17.99C8.53 17.84 6 15.22 6 12c0-3.31 2.69-6 6-6 3.22 0 5.84 2.53 5.99 5.71l-2.1-.63C15.48 9.31 13.89 8 12 8c-2.21 0-4 1.79-4 4 0 1.89 1.31 3.47 3.08 3.89l.63 2.1zM22 12c0 .3-.01.6-.04.9l-1.97-.59c.01-.1.01-.21.01-.31 0-4.42-3.58-8-8-8s-8 3.58-8 8 3.58 8 8 8c.1 0 .21 0 .31-.01l.59 1.97c-.3.03-.6.04-.9.04-5.52 0-10-4.48-10-10S6.48 2 12 2s10 4.48 10 10zm-3.77 4.26L22 15l-10-3 3 10 1.26-3.77 4.27 4.27 1.98-1.98-4.28-4.26z" fill="#7c3aed"/></svg>
<div class="t" id="t91" style="left:430.00px;top:520.60px;font-size:11.30px;line-height:12px;color:#4a5568;letter-spacing:0.467px;">upload artifact 2 ⇒ upload image</div>
<div style="position:absolute;left:945.4px;top:519.1px;width:124.4px;height:16px;border-radius:8px;background:#edf2fb"></div>
<div class="t" id="t92" style="left:951.90px;top:521.20px;font-size:10.90px;line-height:12px;color:#2d3748;letter-spacing:-0.260px;">false Desktop Chrome 4</div>
<div class="t" id="t93" style="left:1121.60px;top:520.50px;font-size:12.00px;line-height:14px;color:#718096;letter-spacing:-0.085px;">6ms</div>
<svg style="position:absolute;left:1235px;top:519px;" width="11.2" height="11.2" viewBox="0 0 24 24"><path d="M10 13a5 5 0 0 0 7.54.54l3-3a5 5 0 0 0-7.07-7.07l-1.72 1.71M14 11a5 5 0 0 0-7.54-.54l-3 3a5 5 0 0 0 7.07 7.07l1.71-1.71" stroke="#3a3a3a" stroke-width="1.3" vector-effect="non-scaling-stroke" transform="matrix(0.2 -0.92 -0.92 0.2 20.64 20.64)" fill="none" stroke-linecap="round" stroke-linejoin="round"/></svg>
<svg style="position:absolute;left:392.85px;top:549.55px;" width="9.5" height="9.5" viewBox="0 0 10 10"><circle cx="5" cy="5" r="5" fill="#20ae7b"/><path d="M2.75 5.3l1.75 1.55 3.4-3.3" stroke="#fff" stroke-width="1.25" fill="none" stroke-linecap="round" stroke-linejoin="round"/></svg>
<div style="position:absolute;left:410px;top:546.4px;width:15.7px;height:15.7px;border-radius:4px;background:#f5f0ff"></div>
<svg style="position:absolute;left:411.75px;top:548.35px;" width="11.9" height="11.9" viewBox="0 0 24 24"><path d="M11.71 17.99C8.53 17.84 6 15.22 6 12c0-3.31 2.69-6 6-6 3.22 0 5.84 2.53 5.99 5.71l-2.1-.63C15.48 9.31 13.89 8 12 8c-2.21 0-4 1.79-4 4 0 1.89 1.31 3.47 3.08 3.89l.63 2.1zM22 12c0 .3-.01.6-.04.9l-1.97-.59c.01-.1.01-.21.01-.31 0-4.42-3.58-8-8-8s-8 3.58-8 8 3.58 8 8 8c.1 0 .21 0 .31-.01l.59 1.97c-.3.03-.6.04-.9.04-5.52 0-10-4.48-10-10S6.48 2 12 2s10 4.48 10 10zm-3.77 4.26L22 15l-10-3 3 10 1.26-3.77 4.27 4.27 1.98-1.98-4.28-4.26z" fill="#7c3aed"/></svg>
<div class="t" id="t94" style="left:430.00px;top:548.40px;font-size:11.30px;line-height:12px;color:#4a5568;letter-spacing:0.395px;">upload artifacts 1 ⇒ upload text file</div>
<div style="position:absolute;left:945.4px;top:546.9px;width:124.4px;height:16px;border-radius:8px;background:#edf2fb"></div>
<div class="t" id="t95" style="left:951.90px;top:549.00px;font-size:10.90px;line-height:12px;color:#2d3748;letter-spacing:-0.260px;">false Desktop Chrome 4</div>
<div class="t" id="t96" style="left:1121.60px;top:548.30px;font-size:12.00px;line-height:14px;color:#718096;letter-spacing:-1.284px;">11ms</div>
<svg style="position:absolute;left:1235px;top:546.8px;" width="11.2" height="11.2" viewBox="0 0 24 24"><path d="M10 13a5 5 0 0 0 7.54.54l3-3a5 5 0 0 0-7.07-7.07l-1.72 1.71M14 11a5 5 0 0 0-7.54-.54l-3 3a5 5 0 0 0 7.07 7.07l1.71-1.71" stroke="#3a3a3a" stroke-width="1.3" vector-effect="non-scaling-stroke" transform="matrix(0.2 -0.92 -0.92 0.2 20.64 20.64)" fill="none" stroke-linecap="round" stroke-linejoin="round"/></svg>
<svg style="position:absolute;left:392.85px;top:577.35px;" width="9.5" height="9.5" viewBox="0 0 10 10"><circle cx="5" cy="5" r="5" fill="#20ae7b"/><path d="M2.75 5.3l1.75 1.55 3.4-3.3" stroke="#fff" stroke-width="1.25" fill="none" stroke-linecap="round" stroke-linejoin="round"/></svg>
<div style="position:absolute;left:410px;top:574.2px;width:15.7px;height:15.7px;border-radius:4px;background:#f5f0ff"></div>
<svg style="position:absolute;left:411.75px;top:576.15px;" width="11.9" height="11.9" viewBox="0 0 24 24"><path d="M11.71 17.99C8.53 17.84 6 15.22 6 12c0-3.31 2.69-6 6-6 3.22 0 5.84 2.53 5.99 5.71l-2.1-.63C15.48 9.31 13.89 8 12 8c-2.21 0-4 1.79-4 4 0 1.89 1.31 3.47 3.08 3.89l.63 2.1zM22 12c0 .3-.01.6-.04.9l-1.97-.59c.01-.1.01-.21.01-.31 0-4.42-3.58-8-8-8s-8 3.58-8 8 3.58 8 8 8c.1 0 .21 0 .31-.01l.59 1.97c-.3.03-.6.04-.9.04-5.52 0-10-4.48-10-10S6.48 2 12 2s10 4.48 10 10zm-3.77 4.26L22 15l-10-3 3 10 1.26-3.77 4.27 4.27 1.98-1.98-4.28-4.26z" fill="#7c3aed"/></svg>
<div class="t" id="t97" style="left:430.00px;top:576.20px;font-size:11.30px;line-height:12px;color:#4a5568;letter-spacing:0.488px;">Testomat functions ⇒ artifact</div>
<div style="position:absolute;left:945.4px;top:574.7px;width:124.4px;height:16px;border-radius:8px;background:#edf2fb"></div>
<div class="t" id="t98" style="left:951.90px;top:576.80px;font-size:10.90px;line-height:12px;color:#2d3748;letter-spacing:-0.260px;">false Desktop Chrome 4</div>
<div class="t" id="t99" style="left:1121.60px;top:576.10px;font-size:12.00px;line-height:14px;color:#718096;letter-spacing:-0.185px;">2ms</div>
<svg style="position:absolute;left:1235px;top:574.6px;" width="11.2" height="11.2" viewBox="0 0 24 24"><path d="M10 13a5 5 0 0 0 7.54.54l3-3a5 5 0 0 0-7.07-7.07l-1.72 1.71M14 11a5 5 0 0 0-7.54-.54l-3 3a5 5 0 0 0 7.07 7.07l1.71-1.71" stroke="#3a3a3a" stroke-width="1.3" vector-effect="non-scaling-stroke" transform="matrix(0.2 -0.92 -0.92 0.2 20.64 20.64)" fill="none" stroke-linecap="round" stroke-linejoin="round"/></svg>
<svg style="position:absolute;left:392.85px;top:605.15px;" width="9.5" height="9.5" viewBox="0 0 10 10"><circle cx="5" cy="5" r="5" fill="#20ae7b"/><path d="M2.75 5.3l1.75 1.55 3.4-3.3" stroke="#fff" stroke-width="1.25" fill="none" stroke-linecap="round" stroke-linejoin="round"/></svg>
<div style="position:absolute;left:410px;top:602px;width:15.7px;height:15.7px;border-radius:4px;background:#f5f0ff"></div>
<svg style="position:absolute;left:411.75px;top:603.95px;" width="11.9" height="11.9" viewBox="0 0 24 24"><path d="M11.71 17.99C8.53 17.84 6 15.22 6 12c0-3.31 2.69-6 6-6 3.22 0 5.84 2.53 5.99 5.71l-2.1-.63C15.48 9.31 13.89 8 12 8c-2.21 0-4 1.79-4 4 0 1.89 1.31 3.47 3.08 3.89l.63 2.1zM22 12c0 .3-.01.6-.04.9l-1.97-.59c.01-.1.01-.21.01-.31 0-4.42-3.58-8-8-8s-8 3.58-8 8 3.58 8 8 8c.1 0 .21 0 .31-.01l.59 1.97c-.3.03-.6.04-.9.04-5.52 0-10-4.48-10-10S6.48 2 12 2s10 4.48 10 10zm-3.77 4.26L22 15l-10-3 3 10 1.26-3.77 4.27 4.27 1.98-1.98-4.28-4.26z" fill="#7c3aed"/></svg>
<div class="t" id="t100" style="left:430.00px;top:604.00px;font-size:11.30px;line-height:12px;color:#4a5568;letter-spacing:0.422px;">upload artifacts 1 ⇒ upload second text file</div>
<div style="position:absolute;left:945.4px;top:602.5px;width:124.4px;height:16px;border-radius:8px;background:#edf2fb"></div>
<div class="t" id="t101" style="left:951.90px;top:604.60px;font-size:10.90px;line-height:12px;color:#2d3748;letter-spacing:-0.260px;">false Desktop Chrome 4</div>
<div class="t" id="t102" style="left:1121.60px;top:603.90px;font-size:12.00px;line-height:14px;color:#718096;letter-spacing:-0.035px;">4ms</div>
<svg style="position:absolute;left:1235px;top:602.4px;" width="11.2" height="11.2" viewBox="0 0 24 24"><path d="M10 13a5 5 0 0 0 7.54.54l3-3a5 5 0 0 0-7.07-7.07l-1.72 1.71M14 11a5 5 0 0 0-7.54-.54l-3 3a5 5 0 0 0 7.07 7.07l1.71-1.71" stroke="#3a3a3a" stroke-width="1.3" vector-effect="non-scaling-stroke" transform="matrix(0.2 -0.92 -0.92 0.2 20.64 20.64)" fill="none" stroke-linecap="round" stroke-linejoin="round"/></svg>
<svg style="position:absolute;left:392.85px;top:632.95px;" width="9.5" height="9.5" viewBox="0 0 10 10"><circle cx="5" cy="5" r="5" fill="#20ae7b"/><path d="M2.75 5.3l1.75 1.55 3.4-3.3" stroke="#fff" stroke-width="1.25" fill="none" stroke-linecap="round" stroke-linejoin="round"/></svg>
<div style="position:absolute;left:410px;top:629.8px;width:15.7px;height:15.7px;border-radius:4px;background:#f5f0ff"></div>
<svg style="position:absolute;left:411.75px;top:631.75px;" width="11.9" height="11.9" viewBox="0 0 24 24"><path d="M11.71 17.99C8.53 17.84 6 15.22 6 12c0-3.31 2.69-6 6-6 3.22 0 5.84 2.53 5.99 5.71l-2.1-.63C15.48 9.31 13.89 8 12 8c-2.21 0-4 1.79-4 4 0 1.89 1.31 3.47 3.08 3.89l.63 2.1zM22 12c0 .3-.01.6-.04.9l-1.97-.59c.01-.1.01-.21.01-.31 0-4.42-3.58-8-8-8s-8 3.58-8 8 3.58 8 8 8c.1 0 .21 0 .31-.01l.59 1.97c-.3.03-.6.04-.9.04-5.52 0-10-4.48-10-10S6.48 2 12 2s10 4.48 10 10zm-3.77 4.26L22 15l-10-3 3 10 1.26-3.77 4.27 4.27 1.98-1.98-4.28-4.26z" fill="#7c3aed"/></svg>
<div class="t" id="t103" style="left:430.00px;top:631.80px;font-size:11.30px;line-height:12px;color:#4a5568;letter-spacing:0.490px;">Testomat functions ⇒ testomat log</div>
<div style="position:absolute;left:945.4px;top:630.3px;width:124.4px;height:16px;border-radius:8px;background:#edf2fb"></div>
<div class="t" id="t104" style="left:951.90px;top:632.40px;font-size:10.90px;line-height:12px;color:#2d3748;letter-spacing:-0.260px;">false Desktop Chrome 4</div>
<div class="t" id="t105" style="left:1121.60px;top:631.70px;font-size:12.00px;line-height:14px;color:#718096;letter-spacing:-1.385px;">1ms</div>
<svg style="position:absolute;left:1235px;top:630.2px;" width="11.2" height="11.2" viewBox="0 0 24 24"><path d="M10 13a5 5 0 0 0 7.54.54l3-3a5 5 0 0 0-7.07-7.07l-1.72 1.71M14 11a5 5 0 0 0-7.54-.54l-3 3a5 5 0 0 0 7.07 7.07l1.71-1.71" stroke="#3a3a3a" stroke-width="1.3" vector-effect="non-scaling-stroke" transform="matrix(0.2 -0.92 -0.92 0.2 20.64 20.64)" fill="none" stroke-linecap="round" stroke-linejoin="round"/></svg>
<svg style="position:absolute;left:392.85px;top:660.75px;" width="9.5" height="9.5" viewBox="0 0 10 10"><circle cx="5" cy="5" r="5" fill="#20ae7b"/><path d="M2.75 5.3l1.75 1.55 3.4-3.3" stroke="#fff" stroke-width="1.25" fill="none" stroke-linecap="round" stroke-linejoin="round"/></svg>
<div style="position:absolute;left:410px;top:657.6px;width:15.7px;height:15.7px;border-radius:4px;background:#f5f0ff"></div>
<svg style="position:absolute;left:411.75px;top:659.55px;" width="11.9" height="11.9" viewBox="0 0 24 24"><path d="M11.71 17.99C8.53 17.84 6 15.22 6 12c0-3.31 2.69-6 6-6 3.22 0 5.84 2.53 5.99 5.71l-2.1-.63C15.48 9.31 13.89 8 12 8c-2.21 0-4 1.79-4 4 0 1.89 1.31 3.47 3.08 3.89l.63 2.1zM22 12c0 .3-.01.6-.04.9l-1.97-.59c.01-.1.01-.21.01-.31 0-4.42-3.58-8-8-8s-8 3.58-8 8 3.58 8 8 8c.1 0 .21 0 .31-.01l.59 1.97c-.3.03-.6.04-.9.04-5.52 0-10-4.48-10-10S6.48 2 12 2s10 4.48 10 10zm-3.77 4.26L22 15l-10-3 3 10 1.26-3.77 4.27 4.27 1.98-1.98-4.28-4.26z" fill="#7c3aed"/></svg>
<div class="t" id="t106" style="left:430.00px;top:659.60px;font-size:11.30px;line-height:12px;color:#4a5568;letter-spacing:0.382px;">should send header X-Header-One with value value1</div>
<div class="t" id="t107" style="left:755.70px;top:661.10px;font-size:10.00px;line-height:11px;color:#2b2b2b;letter-spacing:0.150px;">Parameterized HTTP header test</div>
<div style="position:absolute;left:945.4px;top:658.1px;width:124.4px;height:16px;border-radius:8px;background:#edf2fb"></div>
<div class="t" id="t108" style="left:951.90px;top:660.20px;font-size:10.90px;line-height:12px;color:#2d3748;letter-spacing:-0.260px;">false Desktop Chrome 4</div>
<div class="t" id="t109" style="left:1121.60px;top:659.50px;font-size:12.00px;line-height:14px;color:#718096;letter-spacing:-0.179px;">772ms</div>
<svg style="position:absolute;left:1235px;top:658px;" width="11.2" height="11.2" viewBox="0 0 24 24"><path d="M10 13a5 5 0 0 0 7.54.54l3-3a5 5 0 0 0-7.07-7.07l-1.72 1.71M14 11a5 5 0 0 0-7.54-.54l-3 3a5 5 0 0 0 7.07 7.07l1.71-1.71" stroke="#3a3a3a" stroke-width="1.3" vector-effect="non-scaling-stroke" transform="matrix(0.2 -0.92 -0.92 0.2 20.64 20.64)" fill="none" stroke-linecap="round" stroke-linejoin="round"/></svg>
<svg style="position:absolute;left:392.85px;top:688.55px;" width="9.5" height="9.5" viewBox="0 0 10 10"><circle cx="5" cy="5" r="5" fill="#20ae7b"/><path d="M2.75 5.3l1.75 1.55 3.4-3.3" stroke="#fff" stroke-width="1.25" fill="none" stroke-linecap="round" stroke-linejoin="round"/></svg>
<div style="position:absolute;left:410px;top:685.4px;width:15.7px;height:15.7px;border-radius:4px;background:#f5f0ff"></div>
<svg style="position:absolute;left:411.75px;top:687.35px;" width="11.9" height="11.9" viewBox="0 0 24 24"><path d="M11.71 17.99C8.53 17.84 6 15.22 6 12c0-3.31 2.69-6 6-6 3.22 0 5.84 2.53 5.99 5.71l-2.1-.63C15.48 9.31 13.89 8 12 8c-2.21 0-4 1.79-4 4 0 1.89 1.31 3.47 3.08 3.89l.63 2.1zM22 12c0 .3-.01.6-.04.9l-1.97-.59c.01-.1.01-.21.01-.31 0-4.42-3.58-8-8-8s-8 3.58-8 8 3.58 8 8 8c.1 0 .21 0 .31-.01l.59 1.97c-.3.03-.6.04-.9.04-5.52 0-10-4.48-10-10S6.48 2 12 2s10 4.48 10 10zm-3.77 4.26L22 15l-10-3 3 10 1.26-3.77 4.27 4.27 1.98-1.98-4.28-4.26z" fill="#7c3aed"/></svg>
<div class="t" id="t110" style="left:430.00px;top:687.40px;font-size:11.30px;line-height:12px;color:#4a5568;letter-spacing:0.445px;">should send header X-Header-Two with value value2</div>
<div class="t" id="t111" style="left:755.70px;top:688.90px;font-size:10.00px;line-height:11px;color:#2b2b2b;letter-spacing:0.150px;">Parameterized HTTP header test</div>
<div style="position:absolute;left:945.4px;top:685.9px;width:124.4px;height:16px;border-radius:8px;background:#edf2fb"></div>
<div class="t" id="t112" style="left:951.90px;top:688.00px;font-size:10.90px;line-height:12px;color:#2d3748;letter-spacing:-0.260px;">false Desktop Chrome 4</div>
<div class="t" id="t113" style="left:1121.60px;top:687.30px;font-size:12.00px;line-height:14px;color:#718096;letter-spacing:0.021px;">535ms</div>
<svg style="position:absolute;left:1235px;top:685.8px;" width="11.2" height="11.2" viewBox="0 0 24 24"><path d="M10 13a5 5 0 0 0 7.54.54l3-3a5 5 0 0 0-7.07-7.07l-1.72 1.71M14 11a5 5 0 0 0-7.54-.54l-3 3a5 5 0 0 0 7.07 7.07l1.71-1.71" stroke="#3a3a3a" stroke-width="1.3" vector-effect="non-scaling-stroke" transform="matrix(0.2 -0.92 -0.92 0.2 20.64 20.64)" fill="none" stroke-linecap="round" stroke-linejoin="round"/></svg>
<div style="position:absolute;left:937.3px;top:423.2px;width:176.4px;height:296.5px;border:3.4px solid #f01010;border-radius:2px;z-index:10"></div>
<svg style="position:absolute;left:0;top:0;z-index:10" width="1280" height="720"><path d="M896.8 389L931.5 415.5M930 400.8L932.5 415.8 917.5 418" stroke="#f01010" stroke-width="4" fill="none" stroke-linecap="round" stroke-linejoin="round"/></svg>
<svg style="position:absolute;left:0;top:700px;z-index:21" width="6" height="20"><path d="M0 10.5 Q1 16 2.6 20 L0 20 Z" fill="#000"/></svg>
<div style="position:absolute;left:0;top:690px;width:1280px;height:30px;background:linear-gradient(to bottom, rgba(0,0,0,0), rgba(0,0,0,0.07));z-index:20"></div>
</body></html>
